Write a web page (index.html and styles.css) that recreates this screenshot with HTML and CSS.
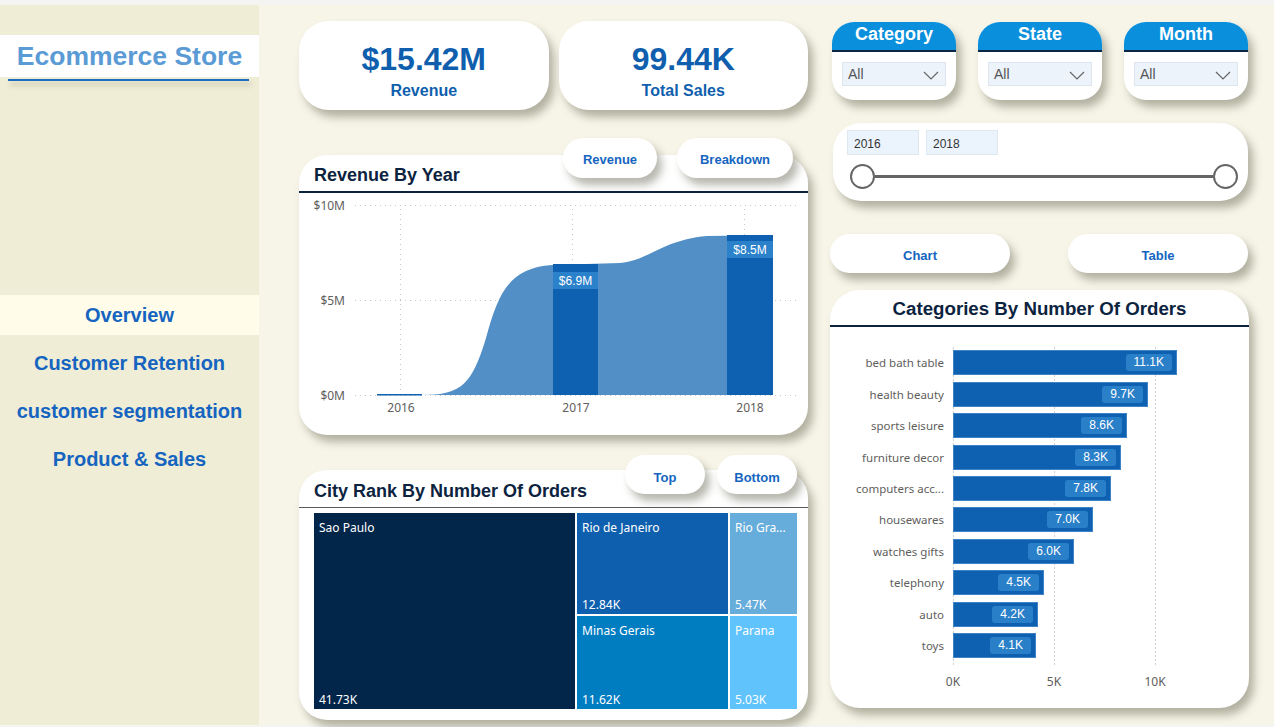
FILE: index.html
```html
<!DOCTYPE html>
<html>
<head>
<meta charset="utf-8">
<link rel="stylesheet" href="styles.css">
</head>
<body>
<div class="page">
  <aside class="sidebar">
    <div class="logo"><span>Ecommerce Store</span></div>
    <div class="logo-line"></div>
    <nav class="nav">
      <div class="nav-item active">Overview</div>
      <div class="nav-item">Customer Retention</div>
      <div class="nav-item">customer segmentation</div>
      <div class="nav-item">Product &amp; Sales</div>
    </nav>
  </aside>
  <main class="main">
    <section class="col-left">
      <div class="kpi-row">
        <div class="kpi"><div class="kpi-value">$15.42M</div><div class="kpi-label">Revenue</div></div>
        <div class="kpi"><div class="kpi-value">99.44K</div><div class="kpi-label">Total Sales</div></div>
      </div>

      <div class="btn-row rev-btns">
        <div class="pill w94">Revenue</div>
        <div class="pill w116">Breakdown</div>
      </div>
      <div class="card rev-card">
        <div class="card-title">Revenue By Year</div>
        <div class="title-line"></div>
        <svg class="rev-chart" width="509" height="240" viewBox="299 193 509 240">
          <g stroke="#c8c8c8" stroke-width="1" stroke-dasharray="1 4">
            <line x1="355" y1="205.5" x2="797" y2="205.5"/>
            <line x1="355" y1="300.5" x2="797" y2="300.5"/>
            <line x1="355" y1="395.5" x2="797" y2="395.5"/>
            <line x1="400.5" y1="209" x2="400.5" y2="395"/>
            <line x1="572.5" y1="209" x2="572.5" y2="395"/>
            <line x1="744.5" y1="209" x2="744.5" y2="395"/>
          </g>
          <g font-family="'Noto Sans', 'DejaVu Sans', sans-serif" font-size="12" fill="#605e5c">
            <text x="345" y="210" text-anchor="end">$10M</text>
            <text x="345" y="305" text-anchor="end">$5M</text>
            <text x="345" y="400" text-anchor="end">$0M</text>
            <text x="401" y="412" text-anchor="middle">2016</text>
            <text x="576" y="412" text-anchor="middle">2017</text>
            <text x="750" y="412" text-anchor="middle">2018</text>
          </g>
          <path d="M377,395 L422,395 C462,395 472,384 486,338 C498,295 508,268 552,265 L620,263 C650,260 662,240 707,236 L773,235 L773,395 Z" fill="#528fc6"/>
          <rect x="377" y="394" width="45" height="1.5" fill="#0e60b0"/>
          <rect x="553" y="264" width="45" height="131" fill="#0e60b0"/>
          <rect x="727" y="235" width="46" height="160" fill="#0e60b0"/>
          <rect x="553" y="272" width="45" height="17" fill="#2b82cb"/>
          <rect x="727" y="241" width="46" height="17" fill="#2b82cb"/>
          <g font-family="'Liberation Sans', Arial, sans-serif" font-size="12" fill="#ffffff" text-anchor="middle">
            <text x="575.5" y="285">$6.9M</text>
            <text x="750" y="254">$8.5M</text>
          </g>
        </svg>
      </div>

      <div class="btn-row city-btns">
        <div class="pill w80">Top</div>
        <div class="pill w80">Bottom</div>
      </div>
      <div class="card city-card">
        <div class="card-title">City Rank By Number Of Orders</div>
        <div class="title-line thin"></div>
        <div class="treemap">
          <div class="tile sp"><span>Sao Paulo</span><span>41.73K</span></div>
          <div class="tile rj"><span>Rio de Janeiro</span><span>12.84K</span></div>
          <div class="tile rg"><span>Rio Gra...</span><span>5.47K</span></div>
          <div class="tile mg"><span>Minas Gerais</span><span>11.62K</span></div>
          <div class="tile pr"><span>Parana</span><span>5.03K</span></div>
        </div>
      </div>
    </section>

    <section class="col-right">
      <div class="slicers">
        <div class="slicer">
          <div class="slicer-head">Category</div>
          <div class="slicer-body"><div class="dropdown"><span>All</span><svg width="16" height="9" viewBox="0 0 16 9"><polyline points="1,1 8,8 15,1" fill="none" stroke="#666" stroke-width="1.2"/></svg></div></div>
        </div>
        <div class="slicer">
          <div class="slicer-head">State</div>
          <div class="slicer-body"><div class="dropdown"><span>All</span><svg width="16" height="9" viewBox="0 0 16 9"><polyline points="1,1 8,8 15,1" fill="none" stroke="#666" stroke-width="1.2"/></svg></div></div>
        </div>
        <div class="slicer">
          <div class="slicer-head">Month</div>
          <div class="slicer-body"><div class="dropdown"><span>All</span><svg width="16" height="9" viewBox="0 0 16 9"><polyline points="1,1 8,8 15,1" fill="none" stroke="#666" stroke-width="1.2"/></svg></div></div>
        </div>
      </div>

      <div class="date-card">
        <div class="date-inputs">
          <div class="date-box">2016</div>
          <div class="date-box">2018</div>
        </div>
        <div class="slider">
          <div class="knob"></div>
          <div class="track"></div>
          <div class="knob"></div>
        </div>
      </div>

      <div class="toggle-row">
        <div class="pill w180">Chart</div>
        <div class="pill w180">Table</div>
      </div>

      <div class="card cat-card">
        <div class="card-title center">Categories By Number Of Orders</div>
        <div class="title-line"></div>
        <div class="bars">
          <div class="bar-row"><div class="lbl">bed bath table</div><div class="bar" style="width:224px"><span class="val">11.1K</span></div></div>
          <div class="bar-row"><div class="lbl">health beauty</div><div class="bar" style="width:195px"><span class="val">9.7K</span></div></div>
          <div class="bar-row"><div class="lbl">sports leisure</div><div class="bar" style="width:174px"><span class="val">8.6K</span></div></div>
          <div class="bar-row"><div class="lbl">furniture decor</div><div class="bar" style="width:168px"><span class="val">8.3K</span></div></div>
          <div class="bar-row"><div class="lbl">computers acc...</div><div class="bar" style="width:158px"><span class="val">7.8K</span></div></div>
          <div class="bar-row"><div class="lbl">housewares</div><div class="bar" style="width:140px"><span class="val">7.0K</span></div></div>
          <div class="bar-row"><div class="lbl">watches gifts</div><div class="bar" style="width:121px"><span class="val">6.0K</span></div></div>
          <div class="bar-row"><div class="lbl">telephony</div><div class="bar" style="width:91px"><span class="val">4.5K</span></div></div>
          <div class="bar-row"><div class="lbl">auto</div><div class="bar" style="width:85px"><span class="val">4.2K</span></div></div>
          <div class="bar-row"><div class="lbl">toys</div><div class="bar" style="width:83px"><span class="val">4.1K</span></div></div>
        </div>
        <div class="axis">
          <span>0K</span><span>5K</span><span>10K</span>
        </div>
      </div>
    </section>
  </main>
</div>
</body>
</html>
```
FILE: styles.css
```css
* { box-sizing: border-box; }
html, body { margin: 0; padding: 0; }
body {
  background: #f4f4f2;
  font-family: "Liberation Sans", Arial, sans-serif;
  width: 1274px;
  height: 727px;
  overflow: hidden;
}
.page {
  margin-top: 5px;
  height: 720px;
  display: flex;
}
.sidebar {
  width: 259px;
  flex: none;
  background: #f0edd7;
  padding-top: 30px;
}
.logo {
  height: 42px;
  background: #ffffff;
  display: flex;
  align-items: center;
  justify-content: center;
}
.logo span {
  color: #5b9bd5;
  font-weight: bold;
  font-size: 26.5px;
}
.logo-line {
  margin: 2px 10px 0 8px;
  height: 2px;
  background: #1a6cc0;
  box-shadow: 2px 4px 5px rgba(90, 90, 70, 0.35);
}
.nav {
  margin-top: 214px;
  display: flex;
  flex-direction: column;
  gap: 8px;
}
.nav-item {
  height: 40px;
  display: flex;
  align-items: center;
  justify-content: center;
  color: #1565c0;
  font-weight: bold;
  font-size: 20px;
}
.nav-item.active { background: #fffde9; }

.main {
  flex: 1;
  background: #f7f5e8;
  display: flex;
  padding-left: 40px;
  gap: 22px;
}
.col-left {
  width: 509px;
  display: flex;
  flex-direction: column;
}
.col-right {
  width: 419px;
  display: flex;
  flex-direction: column;
}

.kpi-row {
  margin-top: 16px;
  display: flex;
  gap: 10px;
}
.kpi {
  width: 250px;
  height: 89px;
  background: #fff;
  border-radius: 30px;
  box-shadow: 5px 7px 8px rgba(95, 95, 75, 0.45);
  display: flex;
  flex-direction: column;
  align-items: center;
  padding-top: 20px;
  color: #0f5fae;
  font-weight: bold;
}
.kpi-value { font-size: 32px; line-height: 37px; }
.kpi-label { font-size: 16px; line-height: 20px; margin-top: 3px; }

.pill {
  height: 40px;
  border-radius: 20px;
  background: #fff;
  box-shadow: 5px 7px 8px rgba(95, 95, 75, 0.45);
  display: flex;
  align-items: center;
  justify-content: center;
  color: #1565c0;
  font-weight: bold;
  font-size: 13px;
}
.w94 { width: 94px; padding-top: 2px; }
.w116 { width: 116px; padding-top: 2px; }
.w80 { width: 80px; }
.w180 { width: 180px; height: 39px; padding-top: 4px; }

.btn-row {
  display: flex;
  justify-content: flex-end;
  position: relative;
  z-index: 2;
}
.rev-btns { margin-top: 28px; gap: 20px; padding-right: 15px; }
.city-btns { margin-top: 20px; gap: 12px; padding-right: 11px; height: 39px; }
.city-btns .pill { height: 39px; padding-top: 5px; }

.card {
  background: #fff;
  border-radius: 28px;
  box-shadow: 5px 7px 8px rgba(95, 95, 75, 0.45);
  overflow: hidden;
}
.rev-card { margin-top: -23px; height: 280px; }
.city-card { margin-top: -24px; height: 250px; }
.card-title {
  height: 36px;
  padding: 10px 0 0 15px;
  font-weight: bold;
  font-size: 18px;
  line-height: 21px;
  color: #0c2340;
}
.card-title.center { text-align: center; padding-left: 0; height: 35px; padding-top: 8px; font-size: 18.7px; }
.title-line {
  height: 2px;
  background: #0c2340;
}
.title-line.thin { height: 1px; background: #5a5a5a; }
.rev-chart { display: block; }

.city-card .card-title { height: 37px; padding-top: 11px; }
.treemap {
  margin: 5px 0 0 15px;
  width: 483px;
  height: 196px;
  display: grid;
  grid-template-columns: 261px 151px 67px;
  grid-template-rows: 101px 93px;
  gap: 2px;
}
.tile {
  display: flex;
  flex-direction: column;
  justify-content: space-between;
  padding: 6px 5px 1px 5px;
  color: #fff;
  font-family: "Noto Sans", "DejaVu Sans", sans-serif;
  font-size: 12px;
  line-height: 17px;
  white-space: nowrap;
  overflow: hidden;
}
.sp { background: #02254a; grid-row: 1 / 3; }
.rj { background: #0e5fae; }
.rg { background: #66addb; }
.mg { background: #007cc1; }
.pr { background: #60c3fc; }

.slicers {
  margin-top: 17px;
  padding-left: 2px;
  display: flex;
  gap: 22px;
}
.slicer {
  width: 124px;
  height: 78px;
  background: #fff;
  border-radius: 22px;
  overflow: hidden;
  box-shadow: 5px 7px 8px rgba(95, 95, 75, 0.45);
}
.slicer-head {
  height: 30px;
  background: #0a8fdc;
  border-bottom: 2px solid #0b2545;
  color: #fff;
  font-weight: bold;
  font-size: 18px;
  text-align: center;
  line-height: 25px;
}
.slicer-body { padding: 10px 10px 0 10px; }
.dropdown {
  height: 24px;
  background: #ecf3fb;
  border: 1px solid #dde5ee;
  display: flex;
  align-items: center;
  justify-content: space-between;
  padding: 0 6px 0 5px;
  font-size: 14px;
  color: #555;
}
.dropdown svg { margin-top: 2px; }

.date-card {
  margin: 23px 0 0 3px;
  width: 415px;
  height: 78px;
  background: #fff;
  border-radius: 28px;
  box-shadow: 5px 7px 8px rgba(95, 95, 75, 0.45);
  padding: 7px 10px 0 14px;
}
.date-inputs { display: flex; gap: 7px; }
.date-box {
  width: 72px;
  height: 25px;
  background: #ebf4fc;
  border: 1px solid #dfe7ef;
  font-size: 12px;
  color: #333;
  padding: 2px 0 0 6px;
  line-height: 23px;
}
.slider {
  margin: 9px 0 0 3px;
  display: flex;
  align-items: center;
}
.knob {
  width: 25px;
  height: 25px;
  border-radius: 50%;
  border: 2px solid #666;
  background: #fff;
  flex: none;
}
.track {
  flex: 1;
  height: 3px;
  background: #646464;
}

.toggle-row {
  margin-top: 33px;
  display: flex;
  justify-content: space-between;
  width: 418px;
}

.cat-card {
  margin-top: 17px;
  height: 418px;
  border-radius: 30px;
}
.bars {
  margin-top: 20px;
  background-image:
    linear-gradient(to bottom, #d0d0d0 50%, transparent 50%),
    linear-gradient(to bottom, #d0d0d0 50%, transparent 50%),
    linear-gradient(to bottom, #d0d0d0 50%, transparent 50%);
  background-size: 1px 4px;
  background-repeat: repeat-y;
  background-position: 123px 0, 224px 0, 325px 0;
  padding: 0 0 4px 0;
}
.bar-row {
  height: 31.44px;
  display: flex;
  align-items: center;
}
.lbl {
  width: 114px;
  text-align: right;
  margin-right: 9px;
  font-family: "Noto Sans", "DejaVu Sans", sans-serif;
  font-size: 11.5px;
  color: #605e5c;
  white-space: nowrap;
}
.bar {
  height: 25px;
  background: #0e60b0;
  border: 1px solid #3d83c6;
  display: flex;
  align-items: center;
  justify-content: flex-end;
  padding-right: 4px;
}
.val {
  background: #2a80c8;
  border-radius: 3px;
  color: #fff;
  font-size: 12px;
  height: 17px;
  line-height: 17px;
  padding: 0 8px;
}
.axis {
  margin-top: 8px;
  height: 16px;
  display: flex;
  font-family: "Noto Sans", "DejaVu Sans", sans-serif;
  font-size: 12px;
  color: #605e5c;
  padding-left: 113px;
}
.axis span {
  width: 20px;
  text-align: center;
  margin-right: 81px;
}
.axis span:last-child { width: 24px; margin-left: -2px; }
```
